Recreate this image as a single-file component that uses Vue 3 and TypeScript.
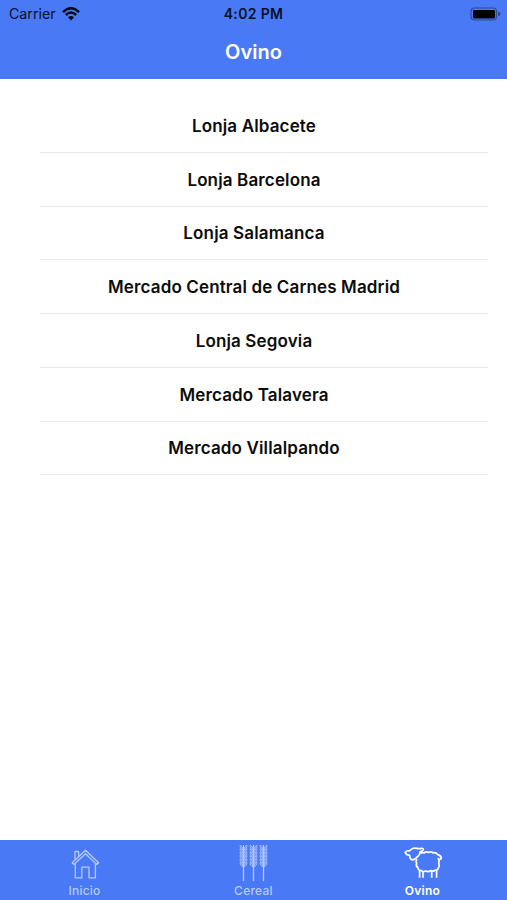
<script setup lang="ts">
import { ref } from 'vue'

type TabId = 'inicio' | 'cereal' | 'ovino'

const markets: string[] = [
  'Lonja Albacete',
  'Lonja Barcelona',
  'Lonja Salamanca',
  'Mercado Central de Carnes Madrid',
  'Lonja Segovia',
  'Mercado Talavera',
  'Mercado Villalpando',
]

const tabs: { id: TabId; label: string }[] = [
  { id: 'inicio', label: 'Inicio' },
  { id: 'cereal', label: 'Cereal' },
  { id: 'ovino', label: 'Ovino' },
]

const active = ref<TabId>('ovino')
const stalks = [4.5, 14.5, 24.5]
const grains = [4, 7.4, 10.8, 14.2, 17.6, 21]
</script>

<template>
  <div class="screen">
    <header class="top">
      <div class="status">
        <div class="carrier">
          <span>Carrier</span>
          <svg class="wifi" viewBox="0 0 18 14" width="18" height="14">
            <path d="M1 5.2Q9-2.6 17 5.2" />
            <path d="M3.8 8Q9 3.2 14.2 8" />
            <path class="dot" d="M6 10.2Q9 7.6 12 10.2L9 13.4Z" />
          </svg>
        </div>
        <span class="time">4:02 PM</span>
        <div class="power">
          <svg viewBox="0 0 31 14" width="31" height="14">
            <rect class="case" x="1" y="1" width="25.5" height="12" rx="3.4" />
            <rect x="3" y="3" width="22" height="8.4" rx="1.4" />
            <path class="tip" d="M28 4.8Q30.6 5.4 30.6 7T28 9.2Z" />
          </svg>
        </div>
      </div>
      <h1>Ovino</h1>
    </header>

    <main>
      <ul>
        <li v-for="market in markets" :key="market">{{ market }}</li>
      </ul>
    </main>

    <nav>
      <button
        v-for="tab in tabs"
        :key="tab.id"
        type="button"
        :class="['tab', { active: active === tab.id }]"
        @click="active = tab.id"
      >
        <svg v-if="tab.id === 'inicio'" class="icon" viewBox="0 0 40 40" width="40" height="40">
          <path d="M7.2 21.8 20.5 9.3 33.6 21.8 31.8 23.5 20.5 12.7 9 23.5Z" />
          <path d="M10 18.4V10.5H13.6V15.2" />
          <path d="M10.3 22.6V36.9H16.8V26.2H24V36.9H30.4V22.6" />
        </svg>
        <svg v-else-if="tab.id === 'cereal'" class="icon wheat" viewBox="0 0 29 40" width="29" height="40">
          <g v-for="x in stalks" :key="x" :transform="`translate(${x} 0)`">
            <path d="M0 4V40" />
            <path
              v-for="y in grains"
              :key="y"
              class="grain"
              :d="`M0 ${y + 5}Q-3.9 ${y + 3.8} -3.4 ${y + .2}Q-.8 ${y + 1.4} 0 ${y + 5}Q3.9 ${y + 3.8} 3.4 ${y + .2}Q.8 ${y + 1.4} 0 ${y + 5}`"
            />
          </g>
        </svg>
        <svg v-else class="icon sheep" viewBox="0 0 40 40" width="40" height="40">
          <path d="M2.2 11.2C3.3 9.8 5 9.6 6.4 9.9C8 8.5 9 7.4 10.8 7.2C13 6.9 15.4 8 17.3 7.6C19.2 7 20.8 7.6 20.3 8.9C19.8 10 18.2 10.6 17 10.9C17.2 13.6 15.4 15.2 13.3 16.8C12 18 10.8 19.1 9.2 18.8C7 18.5 7 16.4 6.5 14.3C5 14.2 2.8 13.1 2.2 11.2Z" />
          <path d="M17.2 12.6Q19 11 21 12Q23.3 10.2 25.5 11.5Q28 10.3 30 11.8Q33 11.3 34.8 13.6Q38.4 14.7 38.3 17.4Q37.3 19.4 35.3 17.6Q36.6 20 35.7 22.2Q37 24.8 35.3 27Q34.8 29.5 32.6 29Q30 31 27.8 29.5Q25.3 31.3 23 30Q20 31.2 18.2 29.6Q15.1 29.5 15 26.8Q12.7 25.2 13.6 22.8Q12.7 20.6 13.6 18" />
          <path d="M16.6 29V36.7M20 30.3V36.7M28.7 29.5V36.7M33.6 29V36.7" />
        </svg>
        <span>{{ tab.label }}</span>
      </button>
    </nav>
  </div>
</template>

<style>
body {
  margin: 0;
}
</style>

<style scoped>
.screen {
  width: 507px;
  height: 900px;
  display: flex;
  flex-direction: column;
  overflow: hidden;
  background: #fff;
  color: #0b0b0b;
  font-family: Inter, "Liberation Sans", sans-serif;
}

.top {
  height: 79px;
  box-sizing: border-box;
  flex: none;
  background: #4a79f5;
  border-bottom: 1px solid #4674e8;
}

.status {
  display: grid;
  grid-template-columns: 1fr auto 1fr;
  align-items: center;
  height: 27px;
  padding: 0 6px 0 9px;
  color: #07102a;
}

.carrier {
  display: flex;
  align-items: center;
  gap: 6px;
  font-size: 14.2px;
}

.wifi {
  fill: none;
  stroke: #050a18;
  stroke-width: 2.4;
}

.wifi .dot {
  fill: #050a18;
  stroke: none;
}

.time {
  margin-left: -3px;
  font-size: 14px;
  font-weight: 600;
  letter-spacing: 0.35px;
}

.power {
  display: flex;
  justify-content: flex-end;
}

.power .case {
  fill: none;
  stroke: #2d4a99;
  stroke-width: 1.2;
}

.power .tip {
  fill: #2d4a99;
}

h1 {
  margin: 0;
  height: 50px;
  line-height: 50px;
  font-size: 20px;
  font-weight: 600;
  text-align: center;
  color: #fff;
}

main {
  flex: 1;
  padding: 20px 19px 0 40px;
}

ul {
  margin: 0;
  padding: 0;
  list-style: none;
}

li {
  display: flex;
  align-items: center;
  justify-content: center;
  height: 53.75px;
  box-sizing: border-box;
  padding: 1px 20px 0 0;
  border-bottom: 1px solid #e9e9e9;
  font-size: 17px;
  font-weight: 600;
  letter-spacing: 0.14px;
}

nav {
  display: grid;
  grid-template-columns: repeat(3, 1fr);
  height: 60px;
  flex: none;
  background: #4a79f5;
}

.tab {
  display: flex;
  flex-direction: column;
  align-items: center;
  padding: 1px 0 0;
  border: 0;
  background: none;
  color: #b6cafb;
  font: 500 12px Inter, "Liberation Sans", sans-serif;
  letter-spacing: 0.25px;
}

.tab span {
  line-height: 20px;
}

.tab.active {
  color: #fff;
  font-weight: 600;
}

.icon {
  flex: none;
  fill: none;
  stroke: currentColor;
  stroke-width: 1.3;
  stroke-linejoin: round;
}

.sheep {
  stroke-width: 1.7;
}

.grain {
  stroke-width: 0.7;
  fill: currentColor;
  fill-opacity: 0.3;
}
</style>
